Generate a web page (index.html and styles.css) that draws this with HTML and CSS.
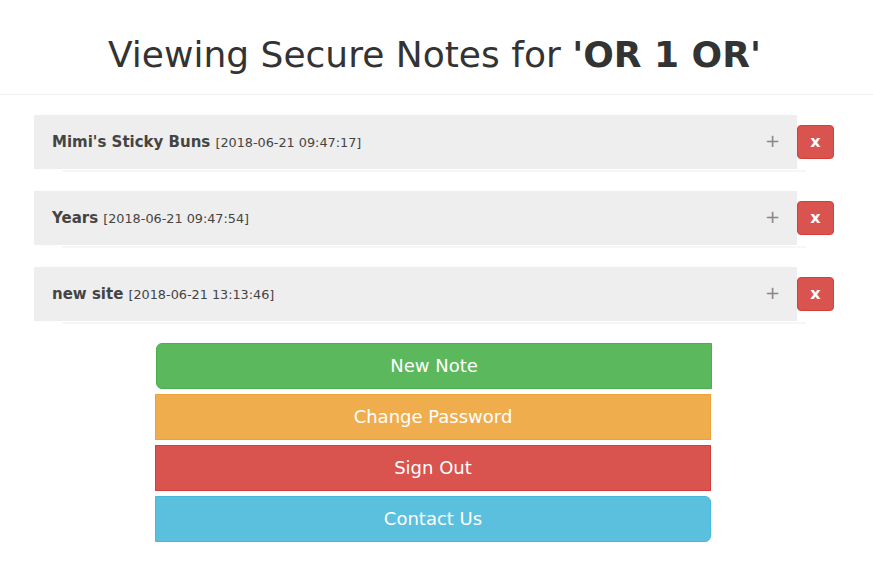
FILE: index.html
```html
<!DOCTYPE html>
<html>
<head>
<meta charset="utf-8">
<link rel="stylesheet" href="styles.css">
</head>
<body>
<header class="header">
  <h1 class="title">Viewing Secure Notes for <b>'OR 1 OR'</b></h1>
</header>
<main class="notes">
  <div class="note">
    <div class="note-head">
      <div class="note-label"><strong class="note-name">Mimi's Sticky Buns</strong> <span class="note-date">[2018-06-21 09:47:17]</span></div>
      <span class="note-toggle">+</span>
    </div>
    <button class="note-del">x</button>
  </div>
  <div class="note-foot"></div>
  <div class="note">
    <div class="note-head">
      <div class="note-label"><strong class="note-name">Years</strong> <span class="note-date">[2018-06-21 09:47:54]</span></div>
      <span class="note-toggle">+</span>
    </div>
    <button class="note-del">x</button>
  </div>
  <div class="note-foot"></div>
  <div class="note">
    <div class="note-head">
      <div class="note-label"><strong class="note-name">new site</strong> <span class="note-date">[2018-06-21 13:13:46]</span></div>
      <span class="note-toggle">+</span>
    </div>
    <button class="note-del">x</button>
  </div>
  <div class="note-foot"></div>
</main>
<nav class="actions">
  <button class="btn btn-green">New Note</button>
  <button class="btn btn-orange">Change Password</button>
  <button class="btn btn-red">Sign Out</button>
  <button class="btn btn-blue">Contact Us</button>
</nav>
</body>
</html>
```
FILE: styles.css
```css
* { box-sizing: border-box; }
html, body { margin: 0; padding: 0; background: #fff; }
body {
  font-family: "DejaVu Sans", "Liberation Sans", sans-serif;
  color: #333;
}
.header {
  height: 95px;
  border-bottom: 1px solid #eee;
  display: flex;
  align-items: center;
  justify-content: center;
}
.title {
  margin: 0 4px 0 0;
  padding-top: 14px;
  font-size: 36px;
  font-weight: normal;
  color: #333;
}
.title b { font-weight: bold; }
.notes {
  padding: 20px 0 0 34px;
  display: flex;
  flex-direction: column;
}
.note {
  display: flex;
  align-items: center;
  height: 54px;
}
.note-head {
  width: 763px;
  height: 54px;
  background: #eee;
  display: flex;
  align-items: center;
  justify-content: space-between;
  padding: 0 17px 2px 18px;
}
.note-name { font-size: 15px; color: #444; }
.note-date { font-size: 12.8px; color: #444; }
.note-toggle {
  font-size: 18px;
  color: #888;
  line-height: 1;
}
.note-del {
  width: 37px;
  height: 34px;
  border: 1px solid #d43f3a;
  border-radius: 4px;
  background: #d9534f;
  color: #fff;
  font-family: "DejaVu Sans", sans-serif;
  font-weight: bold;
  font-size: 16px;
  padding: 0 0 2px 0;
  margin: 0;
}
.note-foot {
  margin: 1px 0 19px 28px;
  width: 744px;
  height: 2px;
  background: #f6f6f6;
}
.actions {
  display: flex;
  flex-direction: column;
  gap: 5px;
  width: 557px;
  margin: 0 0 0 155px;
}
.btn {
  height: 46px;
  width: 556px;
  border: 1px solid transparent;
  color: #fff;
  font-family: "DejaVu Sans", sans-serif;
  font-size: 18px;
  padding: 0 0 2px 0;
  margin: 0;
  border-radius: 0;
}
.btn-green { background: #5cb85c; border-color: #4cae4c; border-radius: 6px 0 0 6px; margin-left: 1px; }
.btn-orange { background: #f0ad4e; border-color: #eea236; }
.btn-red { background: #d9534f; border-color: #d43f3a; }
.btn-blue { background: #5bc0de; border-color: #46b8da; border-radius: 0 6px 6px 0; }
```
